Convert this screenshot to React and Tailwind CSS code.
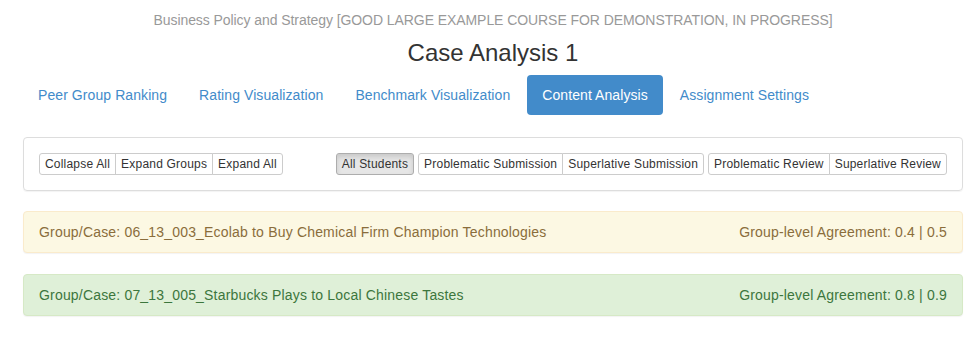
import React from "react";

const btnBase =
  "h-[22px] px-[5px] py-[1px] text-[12px] leading-[18px] tracking-[0.2px] border text-[#333] whitespace-nowrap";

function Group({ items, active }) {
  return (
    <div className="flex">
      {items.map((t, i) => {
        const first = i === 0;
        const last = i === items.length - 1;
        const rounded = `${first ? "rounded-l-[3px]" : ""} ${last ? "rounded-r-[3px]" : ""}`;
        const ml = first ? "" : "-ml-px";
        const style = active
          ? "bg-[#e6e6e6] border-[#adadad] shadow-[inset_0_3px_5px_rgba(0,0,0,0.125)]"
          : "bg-white border-[#ccc]";
        return (
          <button key={t} className={`${btnBase} ${rounded} ${ml} ${style}`}>
            {t}
          </button>
        );
      })}
    </div>
  );
}

export default function App() {
  const tabs = [
    "Peer Group Ranking",
    "Rating Visualization",
    "Benchmark Visualization",
    "Content Analysis",
    "Assignment Settings",
  ];
  return (
    <div
      className="bg-white min-h-[352px] text-[14px] leading-[20px] text-[#333]"
      style={{ fontFamily: '"Liberation Sans", Arial, sans-serif' }}
    >
      <div className="ml-[8px] w-[970px] px-[15px] pt-[10px]">
        <div className="text-center text-[#999] text-[14px] leading-[20px] tracking-[-0.07px]">
          Business Policy and Strategy [GOOD LARGE EXAMPLE COURSE FOR DEMONSTRATION, IN PROGRESS]
        </div>
        <h3 className="mt-[10px] text-center text-[24px] leading-[26px] text-[#333] font-normal">
          Case Analysis 1
        </h3>
        <ul className="mt-[9px] flex gap-[2px]">
          {tabs.map((t) => (
            <li key={t}>
              <a
                className={`block px-[15px] py-[10px] rounded-[4px] leading-[20px] tracking-[0.08px] ${
                  t === "Content Analysis" ? "bg-[#428bca] text-white" : "text-[#428bca]"
                }`}
              >
                {t}
              </a>
            </li>
          ))}
        </ul>

        <div className="mt-[22px] border border-[#ddd] rounded-[4px] shadow-[0_1px_1px_rgba(0,0,0,0.05)] p-[15px] flex justify-between">
          <Group items={["Collapse All", "Expand Groups", "Expand All"]} />
          <div className="flex gap-[4px]">
            <Group items={["All Students"]} active />
            <Group items={["Problematic Submission", "Superlative Submission"]} />
            <Group items={["Problematic Review", "Superlative Review"]} />
          </div>
        </div>

        <div className="mt-[20px] border border-[#faebcc] bg-[#fcf8e3] text-[#8a6d3b] rounded-[4px] shadow-[0_1px_1px_rgba(0,0,0,0.05)] px-[15px] py-[10px] flex justify-between tracking-[0.18px]">
          <span>Group/Case: 06_13_003_Ecolab to Buy Chemical Firm Champion Technologies</span>
          <span>Group-level Agreement: 0.4 | 0.5</span>
        </div>

        <div className="mt-[21px] border border-[#d6e9c6] bg-[#dff0d8] text-[#3c763d] rounded-[4px] shadow-[0_1px_1px_rgba(0,0,0,0.05)] px-[15px] py-[10px] flex justify-between tracking-[0.18px]">
          <span>Group/Case: 07_13_005_Starbucks Plays to Local Chinese Tastes</span>
          <span>Group-level Agreement: 0.8 | 0.9</span>
        </div>
      </div>
    </div>
  );
}
